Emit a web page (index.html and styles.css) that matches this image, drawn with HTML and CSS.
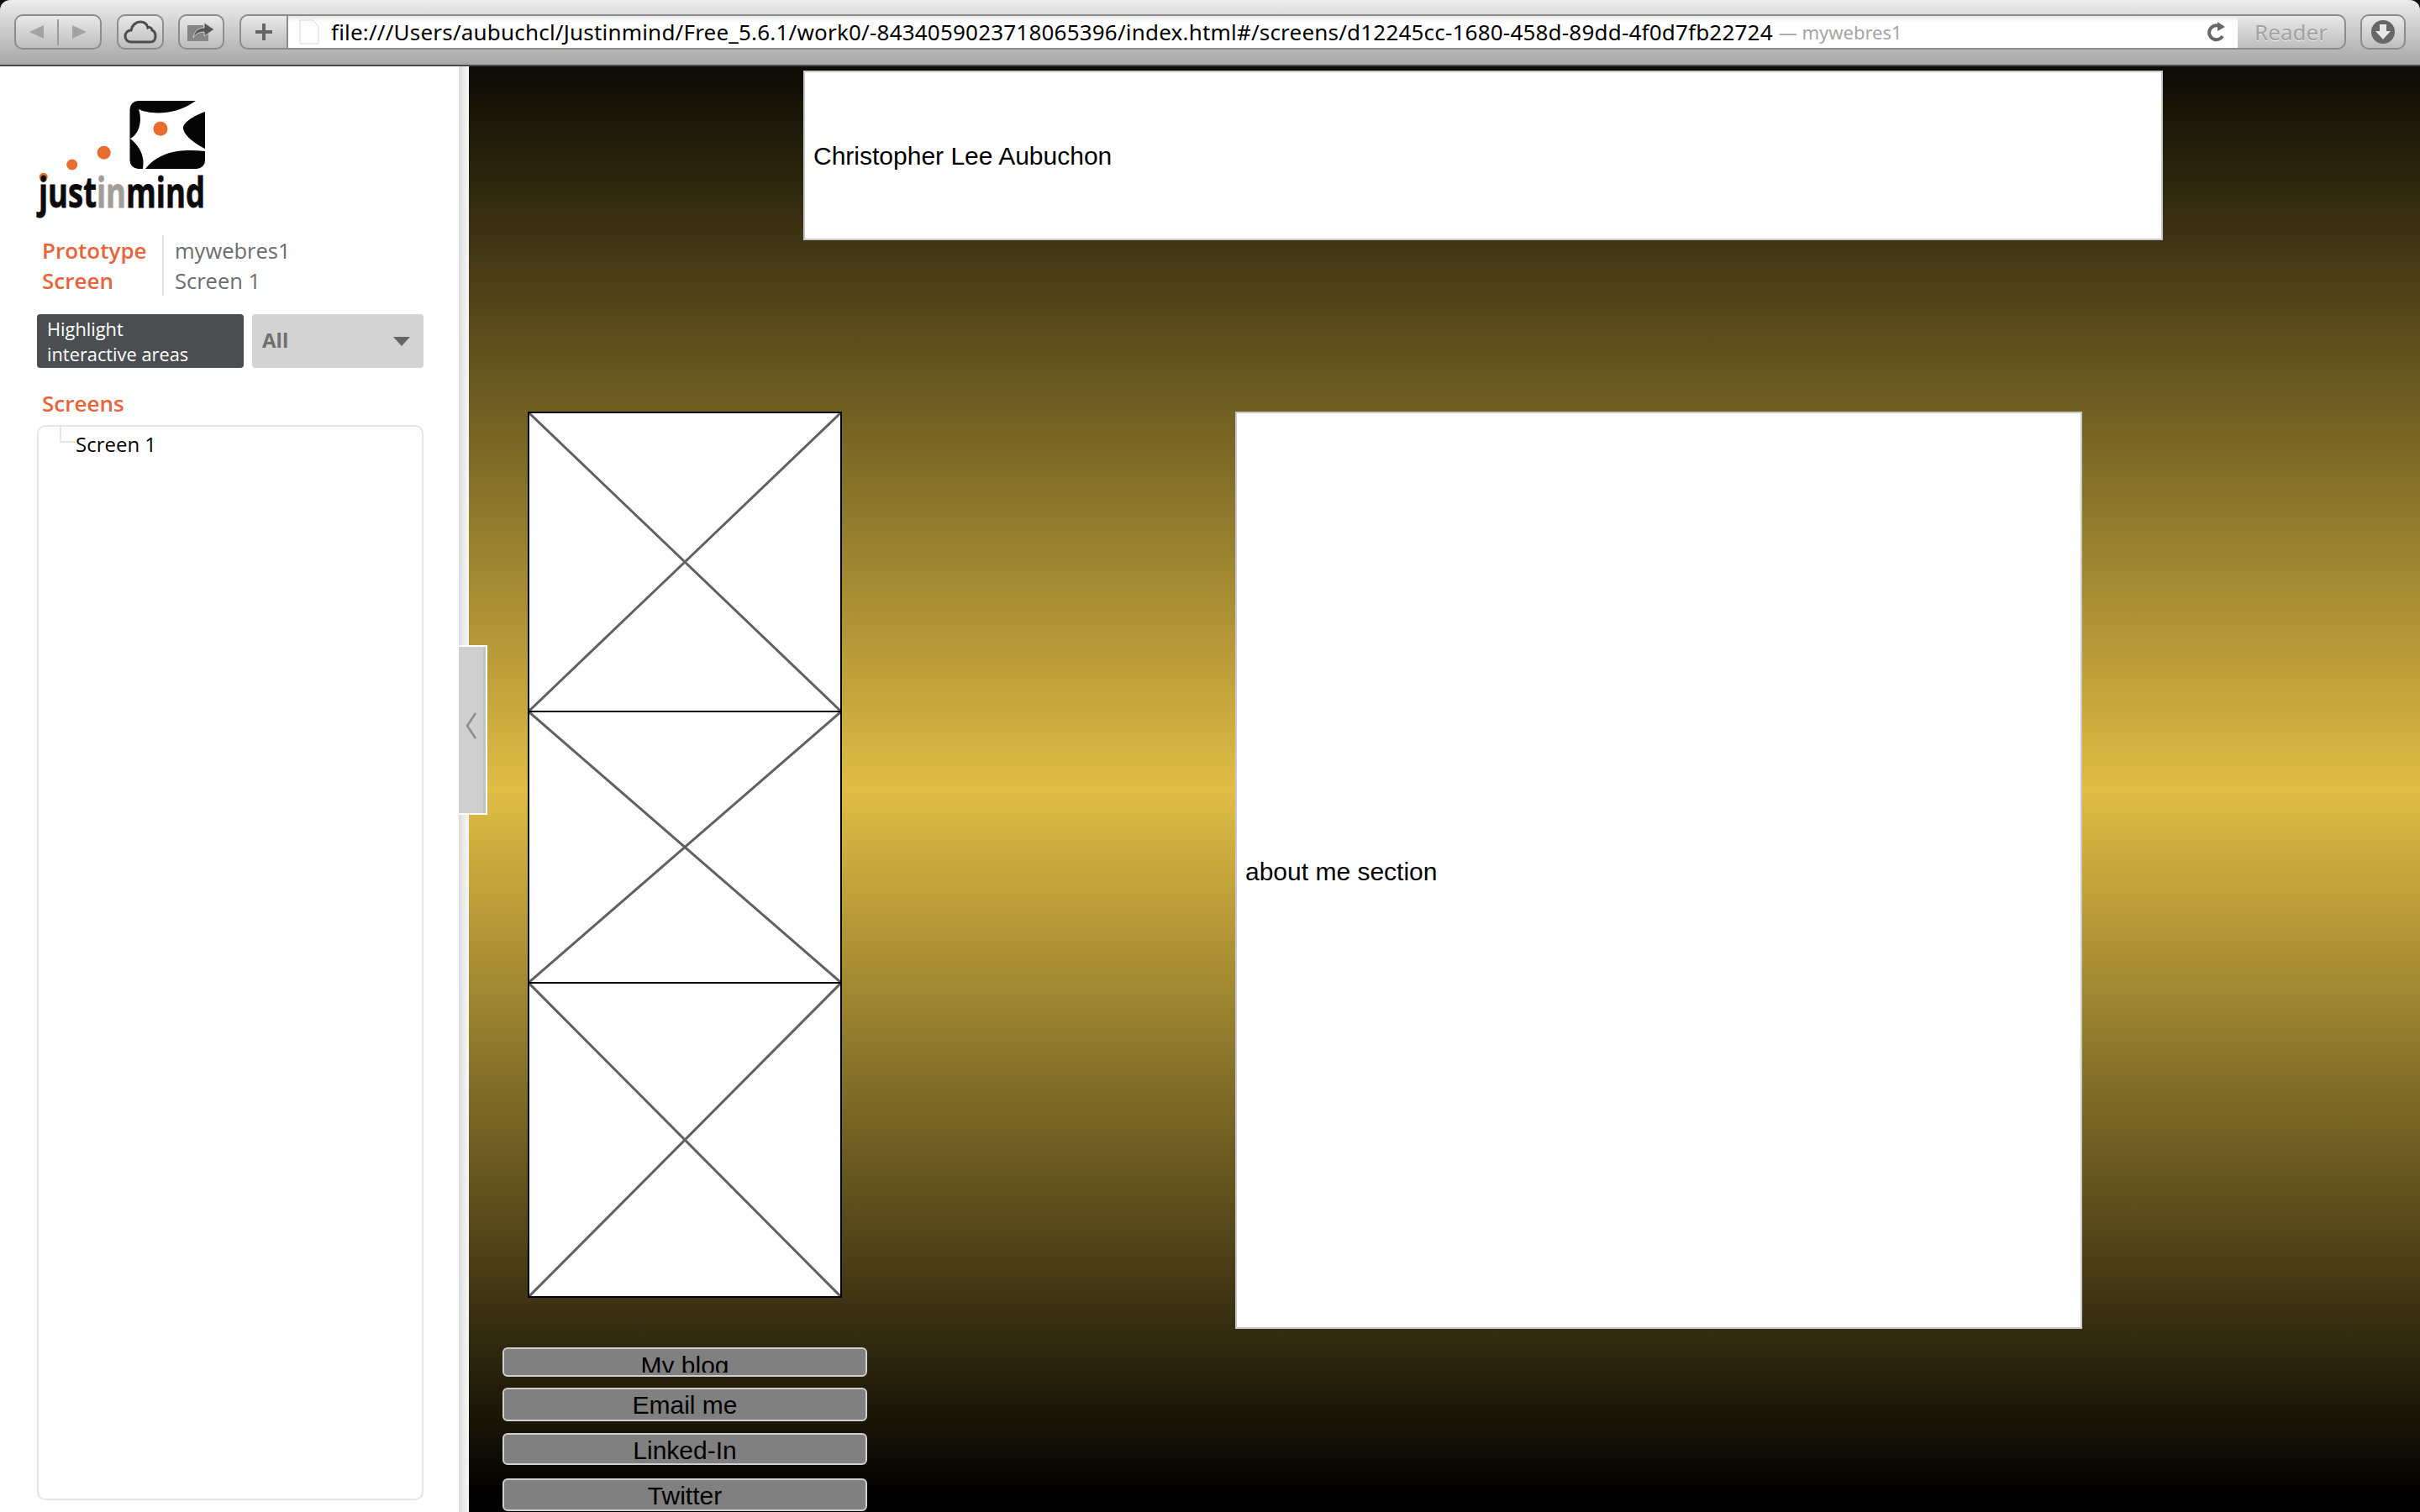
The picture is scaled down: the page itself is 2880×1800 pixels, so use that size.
FILE: index.html
```html
<!DOCTYPE html>
<html lang="en">
<head>
    <meta charset="UTF-8">
    <title>mywebres1</title>
    <link rel="stylesheet" href="styles.css">
</head>
<body>
    <div class="toolbar">
        <div class="tool tool-nav">
            <span class="tri tri-back"></span>
            <span class="nav-sep"></span>
            <span class="tri tri-fwd"></span>
        </div>
        <div class="tool tool-cloud">
            <svg width="40" height="28" viewBox="0 0 40 28"><path d="M9 26C4 26 2 22 2 19C2 15 5 12 9 12C10 6 15 2 20 2C25 2 28 5 29 9C31 8 34 9 34 12C37 13 38 16 38 19C38 23 36 26 32 26Z" fill="none" stroke="#4d4d4d" stroke-width="3"/></svg>
        </div>
        <div class="tool tool-share">
            <svg width="36" height="26" viewBox="0 0 36 26"><path d="M1 5H20V8H26V24H1Z" fill="#858585"/><path d="M8 20C9 12 14 8 21 8V2L33 10L21 18V13C15 13 11 15 8 20Z" fill="#565656" stroke="#cfcfcf"/></svg>
        </div>
        <div class="tool tool-plus">
            <svg width="22" height="22" viewBox="0 0 22 22"><path d="M11 1V21M1 11H21" stroke="#666" stroke-width="4"/></svg>
        </div>
        <div class="address">
            <svg class="page-icon" width="24" height="30" viewBox="0 0 24 30"><path d="M1 1H16L23 8V29H1Z" fill="#fdfdfd" stroke="#d8d8d8"/></svg>
            <span class="url">file:///Users/aubuchcl/Justinmind/Free_5.6.1/work0/-8434059023718065396/index.html#/screens/d12245cc-1680-458d-89dd-4f0d7fb22724</span>
            <span class="page-title">— mywebres1</span>
            <svg class="reload" width="24" height="24" viewBox="0 0 24 24"><path d="M18 17A8.5 8.5 0 1 1 14 5" fill="none" stroke="#666" stroke-width="4"/><path d="M12 0L21 6L12 11Z" fill="#666"/></svg>
        </div>
        <div class="tool tool-reader">Reader</div>
        <div class="tool tool-download">
            <svg width="30" height="30" viewBox="0 0 30 30"><circle cx="15" cy="15" r="14" fill="#666"/><path d="M11 6H19V14H24L15 24L6 14H11Z" fill="#e8e8e8"/></svg>
        </div>
    </div>

    <div class="app">
        <div class="sidebar">
            <svg class="logo" width="210" height="150" viewBox="0 0 210 150">
                <rect x="114.500" y="5" width="89.500" height="81" rx="10" fill="#050505"/>
                <path d="M125 15C135 20 165 25 193 5H204V18C185 25 178 33 178 37C178 45 190 55 204 62V65C175 62 150 65 133 86H130C133 70 125 58 115 50C125 45 130 30 125 15Z" fill="#fff"/>
                <circle cx="151" cy="38.300" r="8.500" fill="#e96c30"/>
                <circle cx="83.700" cy="66.700" r="8" fill="#e96c30"/>
                <circle cx="45.700" cy="81" r="6.500" fill="#e96c30"/>
                <circle cx="11.700" cy="95.700" r="5" fill="#e96c30"/>
                <text class="logo-text" x="6" y="132" textLength="198" lengthAdjust="spacingAndGlyphs">just<tspan class="logo-in">in</tspan>mind</text>
            </svg>

            <div class="info">
                <div class="info-label">Prototype</div>
                <div class="info-value">mywebres1</div>
                <div class="info-label">Screen</div>
                <div class="info-value">Screen 1</div>
            </div>

            <div class="controls">
                <div class="highlight">Highlight<br>interactive areas</div>
                <div class="select">
                    <span>All</span>
                    <span class="select-arrow"></span>
                </div>
            </div>

            <div class="section-title">Screens</div>
            <div class="tree">
                <div class="tree-item">
                    <span class="tree-line"></span>
                    <span class="tree-text">Screen 1</span>
                </div>
            </div>
        </div>

        <div class="strip"></div>

        <div class="canvas">
            <div class="title-box">Christopher Lee Aubuchon</div>
            <div class="canvas-row">
                <div class="left-col">
                    <div class="images">
                        <div class="image image-one">
                            <svg width="100%" height="100%" viewBox="0 0 100 100" preserveAspectRatio="none"><path class="cross" d="M0 0L100 100M100 0L0 100"/></svg>
                        </div>
                        <div class="image image-two">
                            <svg width="100%" height="100%" viewBox="0 0 100 100" preserveAspectRatio="none"><path class="cross" d="M0 0L100 100M100 0L0 100"/></svg>
                        </div>
                        <div class="image image-three">
                            <svg width="100%" height="100%" viewBox="0 0 100 100" preserveAspectRatio="none"><path class="cross" d="M0 0L100 100M100 0L0 100"/></svg>
                        </div>
                    </div>
                    <div class="btn btn-blog"><span>My blog</span></div>
                    <div class="btn btn-email"><span>Email me</span></div>
                    <div class="btn btn-linkedin"><span>Linked-In</span></div>
                    <div class="btn btn-twitter"><span>Twitter</span></div>
                </div>
                <div class="about-box">about me section</div>
            </div>
        </div>

        <div class="collapse-handle">
            <svg width="14" height="32" viewBox="0 0 14 32"><path d="M12 1L2 16L12 31" fill="none" stroke="#8a8a8a" stroke-width="2.500"/></svg>
        </div>
    </div>
</body>
</html>
```

FILE: styles.css
```css
* { box-sizing: border-box; }
html, body { margin: 0; padding: 0; height: 1800px; overflow: hidden; background: #0c0a04; }

/* browser toolbar */
.toolbar { display: flex; height: 79px; padding: 17px 17px 0; background: linear-gradient(#ececec, #a9a9a9 97%); border-bottom: 2px solid #4a4a4a; border-radius: 12px 12px 0 0; font-family: "Noto Sans", sans-serif; }
.tool { display: flex; align-items: center; justify-content: center; height: 42px; border: 2px solid #8c8c8c; border-radius: 10px; background: linear-gradient(#e9e9e9, #bdbdbd); }
.tool-nav { width: 104px; margin-right: 18px; padding: 0 16px; justify-content: space-between; }
.tool-cloud { width: 56px; margin-right: 17px; }
.tool-share { width: 55px; margin-right: 18px; }
.tool-plus { width: 58px; border-radius: 10px 0 0 10px; }
.tool-reader { width: 129px; border-left: none; border-radius: 0 10px 10px 0; margin-right: 17px; font-size: 26px; color: #a2a2a2; text-shadow: 0 1px 0 #eee; }
.tool-download { width: 54px; }
.tri { width: 0; height: 0; border-top: 8px solid transparent; border-bottom: 8px solid transparent; }
.tri-back { border-right: 17px solid #a3a3a3; }
.tri-fwd { border-left: 17px solid #a3a3a3; }
.nav-sep { width: 2px; height: 31px; background: #9c9c9c; }
.address { display: flex; align-items: center; width: 2320px; height: 42px; padding: 0 12px 0 13px; background: linear-gradient(#e6e6e6, #fff 18%); border-top: 2px solid #8c8c8c; border-bottom: 2px solid #8c8c8c; font-size: 26px; white-space: nowrap; }
.page-icon { margin-right: 14px; flex: none; }
.url { color: #000; letter-spacing: 0.200px; }
.page-title { margin-left: 7px; color: #a5a5a5; font-size: 22px; }
.reload { margin-left: auto; flex: none; }

/* app */
.app { position: relative; display: flex; height: 1721px; }
.sidebar { width: 546px; padding: 36px 42px 0 44px; background: #fff; font-family: "Open Sans", sans-serif; }
.logo { display: block; margin-left: -4px; }
.logo-text { font-family: "Open Sans", sans-serif; font-weight: 700; font-size: 50px; fill: #0b0b0b; stroke: #0b0b0b; stroke-width: 0.800px; }
.logo-in { fill: #a29e9a; stroke: #a29e9a; }
.info { display: grid; grid-template-columns: 151px 1fr; margin-top: 15px; font-size: 25.500px; line-height: 36px; }
.info-label { padding-left: 6px; color: #e8643a; font-size: 26px; font-weight: 600; border-right: 2px solid #e2e2e2; }
.info-value { padding-left: 13px; color: #6a6d70; }
.controls { display: flex; gap: 10px; margin-top: 22px; height: 64px; }
.highlight { width: 246px; padding: 3px 12px; border-radius: 4px; background: #4b4e51; color: #fff; font-size: 21.800px; line-height: 30px; }
.select { display: flex; align-items: center; justify-content: space-between; width: 204px; padding: 0 16px 3px 12px; border-radius: 4px; background: #d3d3d3; color: #6f6f6f; font-size: 24px; font-weight: 700; }
.select-arrow { width: 0; height: 0; margin-top: 3px; border-left: 10px solid transparent; border-right: 10px solid transparent; border-top: 11px solid #666; }
.section-title { margin-top: 24px; padding-left: 6px; color: #e8643a; font-size: 26px; font-weight: 600; line-height: 37px; }
.tree { height: 1280px; margin-top: 7px; border: 2px solid #e6e6e6; border-radius: 10px; }
.tree-item { display: flex; align-items: flex-start; padding-left: 25px; color: #000; font-size: 24px; line-height: 36px; }
.tree-line { width: 19px; height: 19px; border-left: 2px solid #e6e6e6; border-bottom: 2px solid #e6e6e6; }
.tree-text { padding-top: 3px; }
.strip { width: 12px; background: linear-gradient(to right, #dcdcdc, #f8f8f8); }

/* prototype canvas */
.canvas { flex: 1; padding-top: 5px; background: linear-gradient(#0c0a04, #e0bd45 50%, #000 99%); font-family: "Liberation Sans", Arial, sans-serif; font-size: 30px; color: #000; overflow: hidden; }
.title-box { display: flex; align-items: center; width: 1618px; height: 202px; margin-left: 398px; padding: 2px 0 0 10px; background: #fff; border: 2px solid #c8c8c8; }
.canvas-row { display: flex; margin-top: 204px; margin-left: 40px; }
.left-col { width: 434px; margin-right: 438px; }
.images { width: 374px; margin: 0 0 59px 30px; }
.image { background: #fefefe; border: 2px solid #000; }
.image svg { display: block; }
.image-one { height: 358px; }
.image-two { height: 325px; margin-top: -2px; }
.image-three { height: 376px; margin-top: -2px; }
.cross { fill: none; stroke: #606060; stroke-width: 3px; vector-effect: non-scaling-stroke; }
.about-box { display: flex; align-items: center; width: 1008px; height: 1092px; padding: 4px 0 0 10px; background: #fff; border: 2px solid #c8c8c8; }

.btn { display: flex; justify-content: center; padding-top: 2px; background: #808080; border: 2px solid #cfcfcf; border-radius: 6px; overflow: hidden; line-height: 34px; }
.btn span { display: block; height: 34px; overflow: hidden; }
.btn-blog { height: 35px; margin-bottom: 13px; padding-top: 3px; }
.btn-blog span { height: 25px; }
.btn-email { height: 40px; margin-bottom: 14px; }
.btn-linkedin { height: 38px; margin-bottom: 16px; }
.btn-twitter { height: 39px; }

.collapse-handle { position: absolute; left: 546px; top: 689px; display: flex; align-items: center; padding: 0 0 10px 8px; width: 34px; height: 202px; background: #cfcfcf; border: 2px solid #fff; border-left: none; box-shadow: inset -3px 0 0 #c2c2c2; }
```
